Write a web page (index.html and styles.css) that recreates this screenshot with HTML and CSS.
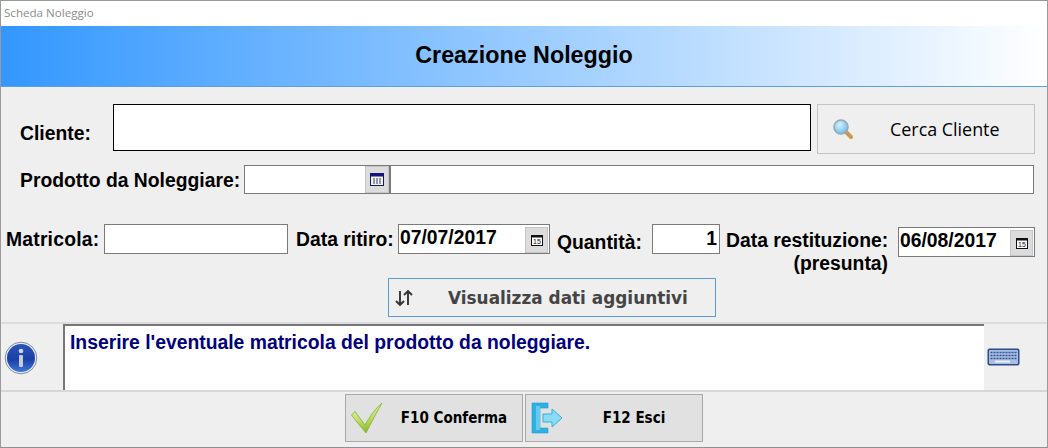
FILE: index.html
```html
<!DOCTYPE html>
<html lang="it">
<head>
<meta charset="utf-8">
<title>Scheda Noleggio</title>
<link rel="stylesheet" href="styles.css">
</head>
<body>
<div class="window">
  <div class="titlebar">Scheda Noleggio</div>
  <header class="banner"><h1>Creazione Noleggio</h1></header>
  <main class="form">
    <div class="row-client">
      <label class="lbl lbl-client">Cliente:</label>
      <div class="field field-client"></div>
      <button class="btn-search">
        <svg class="ico-search" width="22" height="22" viewBox="0 0 22 22">
          <defs><radialGradient id="lens" cx="40%" cy="35%" r="65%"><stop offset="0" stop-color="#d6f2ff"/><stop offset="1" stop-color="#6fbdf0"/></radialGradient></defs>
          <path d="M13 13 L19 19" stroke="#c79a50" stroke-width="4" stroke-linecap="round"/>
          <circle cx="9" cy="9" r="7" fill="url(#lens)" stroke="#9aa8b4" stroke-width="1.6"/>
        </svg>
        <span>Cerca Cliente</span>
      </button>
    </div>
    <div class="row-product">
      <label class="lbl">Prodotto da Noleggiare:</label>
      <div class="field field-code">
        <span class="picker picker-grid">
          <svg width="14" height="13" viewBox="0 0 14 13"><rect x="0.5" y="0.5" width="13" height="12" fill="#f4f4e4" stroke="#14147a"/><rect x="0.5" y="0.5" width="13" height="3" fill="#14147a"/><path d="M3 6h2M6 6h2M9 6h2M3 8h2M6 8h2M9 8h2M3 10h2M6 10h2M9 10h2" stroke="#3a3a8a"/></svg>
        </span>
      </div>
      <div class="field field-desc"></div>
    </div>
    <div class="row-details">
      <label class="lbl lbl-mat">Matricola:</label>
      <div class="field field-mat"></div>
      <label class="lbl lbl-ritiro">Data ritiro:</label>
      <div class="field field-date date-ritiro">07/07/2017
        <span class="picker"><svg width="12" height="11" viewBox="0 0 12 11"><rect x="0.5" y="0.5" width="11" height="10" fill="#fff" stroke="#111"/><rect x="0.5" y="0.5" width="11" height="2" fill="#111"/><text x="6" y="9.2" class="cal-num">15</text></svg></span>
      </div>
      <label class="lbl lbl-qta">Quantità:</label>
      <div class="field field-qta">1</div>
      <label class="lbl lbl-rest">Data restituzione:<br>(presunta)</label>
      <div class="field field-date date-rest">06/08/2017
        <span class="picker"><svg width="12" height="11" viewBox="0 0 12 11"><rect x="0.5" y="0.5" width="11" height="10" fill="#fff" stroke="#111"/><rect x="0.5" y="0.5" width="11" height="2" fill="#111"/><text x="6" y="9.2" class="cal-num">15</text></svg></span>
      </div>
    </div>
    <button class="btn-toggle">
      <svg width="20" height="20" viewBox="0 0 20 20" fill="none" stroke="#333" stroke-width="1.9"><path d="M6 3v14M2 13l4 4 4-4M14 17V3M10 7l4-4 4 4"/></svg>
      <span>Visualizza dati aggiuntivi</span>
    </button>
  </main>
  <section class="info">
    <svg class="ico-info" width="34" height="34" viewBox="0 0 34 34">
      <defs><linearGradient id="blue" x1="0" y1="0" x2="0" y2="1"><stop offset="0" stop-color="#2c55b8"/><stop offset="0.55" stop-color="#1a3fa5"/><stop offset="1" stop-color="#3c78d8"/></linearGradient></defs>
      <circle cx="17" cy="17" r="15.800" fill="#e8ecf4" stroke="#7f8ba5" stroke-width="1"/>
      <circle cx="17" cy="17" r="14" fill="url(#blue)"/>
      <circle cx="17" cy="10" r="2.3" fill="#cfd8ea"/>
      <rect x="15" y="14" width="4" height="12" rx="1" fill="#c9ccd4"/>
    </svg>
    <div class="message">Inserire l'eventuale matricola del prodotto da noleggiare.</div>
    <svg class="ico-kbd" width="33" height="18" viewBox="0 0 33 18">
      <rect x="0.5" y="0.5" width="32" height="17" rx="2" fill="#2f4c86"/>
      <rect x="2" y="2" width="29" height="14" rx="1" fill="#a9c0e6"/>
      <path d="M3.5 4.500h26M3.500 7.500h26M3.500 10.500h26" stroke="#33528e" stroke-width="1.300" stroke-dasharray="2 1"/>
      <path d="M8 13.500h15" stroke="#eef4ff" stroke-width="1.800"/>
    </svg>
  </section>
  <footer class="footer">
    <button class="btn-foot">
      <svg class="ico-foot" width="32" height="32" viewBox="0 0 32 32">
        <defs><linearGradient id="green" x1="0" y1="0" x2="0.300" y2="1"><stop offset="0" stop-color="#eef4b4"/><stop offset="0.600" stop-color="#c4de6c"/><stop offset="1" stop-color="#86bb32"/></linearGradient></defs>
        <path d="M0.500 13 L4 9.500 L14 23 C19 14 25 6 31 1 C26 10 20 21 15 31 C10 25 5 19 0.500 13 Z" fill="url(#green)" stroke="#8ab53c" stroke-width="0.900"/>
      </svg>
      <span>F10 Conferma</span>
    </button>
    <button class="btn-foot">
      <svg class="ico-foot" width="32" height="32" viewBox="0 0 32 32">
        <path d="M1 1H17V6H9V26H17V31H1Z" fill="#2eb0e2" stroke="#1d9fd4" stroke-width="0.600"/>
        <path d="M5 4H9V28H5Z" fill="#63cbf0"/>
        <path d="M12 12H21V7L31 16L21 25V20H12Z" fill="#8adcf5" stroke="#35aeda"/>
      </svg>
      <span>F12 Esci</span>
    </button>
  </footer>
</div>
</body>
</html>
```
FILE: styles.css
```css
* { box-sizing: border-box; }
html, body { margin: 0; padding: 0; }
body { width: 1048px; height: 448px; overflow: hidden; background: #efefef; font-family: "Liberation Sans", Arial, sans-serif; }
button { font-family: inherit; margin: 0; padding: 0; cursor: default; }

.window { width: 1048px; height: 448px; border: 1px solid #9a9a9a; border-bottom-color: #8f8f8f; display: flex; flex-direction: column; background: #efefef; }
.titlebar { height: 25px; flex: none; background: #fff; color: #8c8c8c; font-family: "Open Sans", "Liberation Sans", sans-serif; font-size: 11.600px; line-height: 24px; padding-left: 3px; }
.banner { height: 61px; flex: none; background: linear-gradient(90deg, #3397ff 0%, #ffffff 100%); border-bottom: 1px solid #5c9fe0; display: flex; align-items: center; justify-content: center; }
.banner h1 { margin: -2px 0 0 0; font-size: 23.300px; font-weight: 700; color: #000; }

.form { height: 237px; flex: none; border-bottom: 2px solid #dcdcdc; position: relative; }
.lbl { font-size: 19.330px; font-weight: 700; color: #000; white-space: nowrap; line-height: 20px; }
.field { background: #fff; border: 1px solid #7a7a7a; font-size: 19.330px; font-weight: 700; color: #000; }

.row-client { display: flex; align-items: flex-start; padding: 17px 0 0 19px; height: 78px; }
.lbl-client { width: 93px; margin-top: 20px; }
.field-client { width: 698px; height: 47px; border-color: #000; }
.btn-search { width: 218px; height: 50px; margin-left: 6px; background: #efefef; border: 1px solid #c4c4c4; display: flex; align-items: center; font-size: 18px; color: #000; padding: 0 0 0 14px; }
.btn-search span { margin-left: 36px; font-family: "Open Sans", sans-serif; font-size: 17.900px; }
.ico-search { flex: none; }

.row-product { display: flex; align-items: center; padding-left: 19px; height: 29px; }
.row-product .lbl { width: 224px; margin-top: 2px; }
.field-code { width: 146px; height: 29px; display: flex; justify-content: flex-end; }
.field-desc { width: 644px; height: 29px; }
.picker { width: 24px; background: #dcdcdc; border: 1px solid #c6c6c6; display: flex; align-items: center; justify-content: center; flex: none; }
.picker-grid { height: 27px; }

.row-details { display: flex; align-items: flex-start; margin-top: 30px; padding-left: 5px; height: 53px; }
.lbl-mat { width: 98px; margin-top: 6px; letter-spacing: 0.200px; }
.field-mat { width: 184px; height: 30px; }
.lbl-ritiro { width: 102px; margin: 6px 0 0 8px; }
.field-date { width: 152px; height: 30px; display: flex; justify-content: space-between; padding: 2px 0 0 1px; line-height: 22px; position: relative; }
.field-date .picker { width: 23px; height: 26px; margin: 0 1px 0 0; }
.lbl-qta { width: 95px; margin: 9px 0 0 7px; }
.field-qta { width: 68px; height: 30px; text-align: right; padding: 2px 2px 0 0; line-height: 24px; }
.lbl-rest { width: 162px; margin: 5px 0 0 6px; text-align: right; line-height: 23px; }
.date-rest { width: 137px; margin: 3px 0 0 10px; }

.btn-toggle { display: flex; align-items: center; width: 328px; height: 39px; margin: 1px 0 0 387px; background: #efefef; border: 1px solid #5b9bd5; color: #444; font-weight: 700; padding-left: 5px; }
.btn-toggle span { margin-left: 34px; font-family: "DejaVu Sans", sans-serif; font-size: 16.900px; }

.info { height: 68px; flex: none; display: flex; align-items: stretch; border-bottom: 2px solid #d6d6d6; }
.ico-info { align-self: center; margin: 1px 0 0 3px; flex: none; }
.message { width: 921px; margin-left: 25px; background: #fff; border-left: 2px solid #777; border-top: 2px solid #777; color: #000080; font-size: 19.330px; font-weight: 700; padding: 6px 0 0 5px; }
.ico-kbd { align-self: center; margin-left: 3px; flex: none; }

.footer { flex: 1; display: flex; justify-content: center; gap: 2px; align-items: flex-start; padding: 2px 1px 0 0; }
.btn-foot { width: 178px; height: 48px; background: #e1e1e1; border: 1px solid #a8a8a8; display: flex; align-items: center; position: relative; font-family: "DejaVu Sans Condensed", "DejaVu Sans", sans-serif; font-size: 15px; font-weight: 700; color: #000; padding-left: 5px; }
.btn-foot span { position: absolute; left: 0; right: 0; padding-left: 41px; text-align: center; }
.ico-foot { flex: none; }
.cal-num { font-size: 7px; font-family: "Liberation Sans", sans-serif; font-weight: 400; text-anchor: middle; fill: #111; }
```
